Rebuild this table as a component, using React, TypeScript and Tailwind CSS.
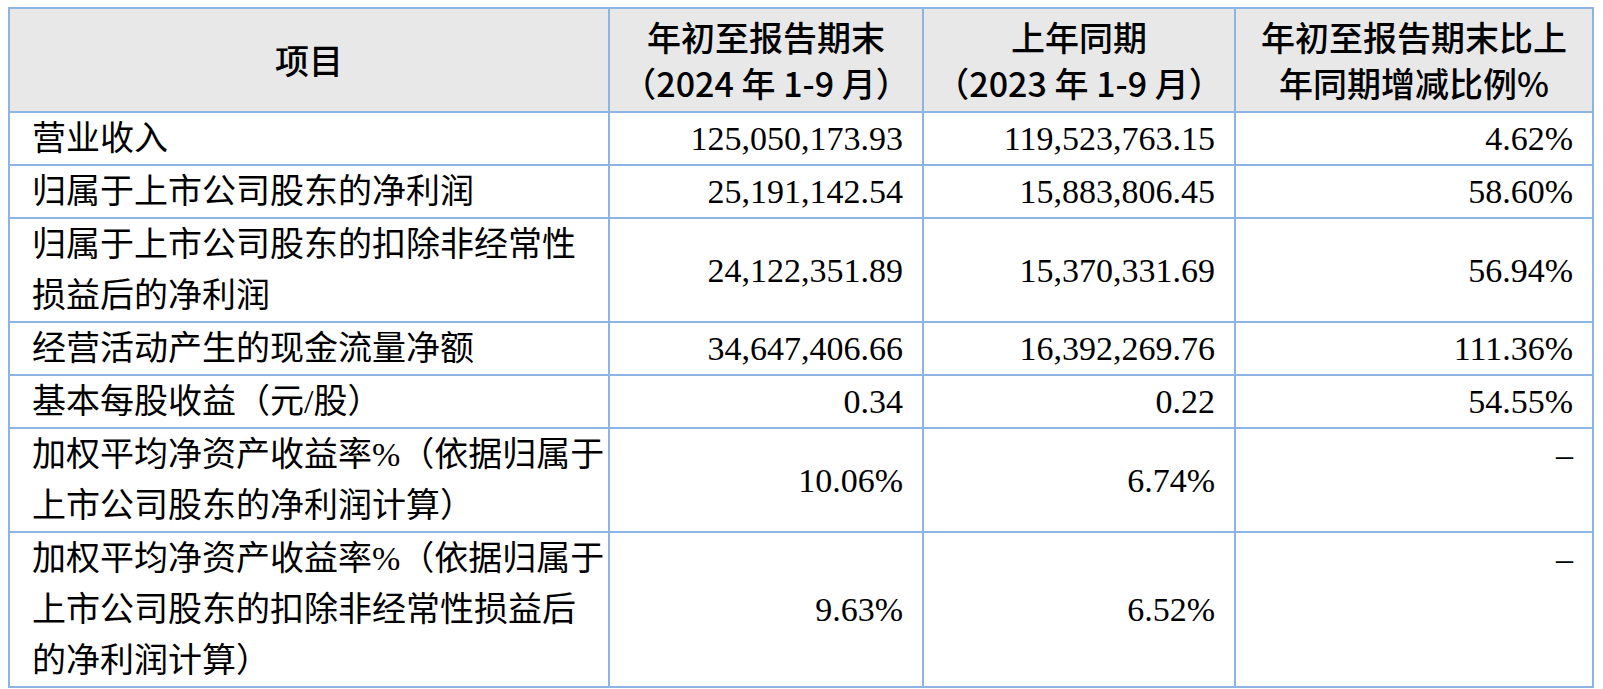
export default function App() {
  const rows: { label: string[]; a: string; b: string; c: string; dash?: boolean }[] = [
    { label: ["营业收入"], a: "125,050,173.93", b: "119,523,763.15", c: "4.62%" },
    { label: ["归属于上市公司股东的净利润"], a: "25,191,142.54", b: "15,883,806.45", c: "58.60%" },
    {
      label: ["归属于上市公司股东的扣除非经常性", "损益后的净利润"],
      a: "24,122,351.89",
      b: "15,370,331.69",
      c: "56.94%",
    },
    { label: ["经营活动产生的现金流量净额"], a: "34,647,406.66", b: "16,392,269.76", c: "111.36%" },
    { label: ["基本每股收益（元/股）"], a: "0.34", b: "0.22", c: "54.55%" },
    {
      label: ["加权平均净资产收益率%（依据归属于", "上市公司股东的净利润计算）"],
      a: "10.06%",
      b: "6.74%",
      c: "–",
      dash: true,
    },
    {
      label: ["加权平均净资产收益率%（依据归属于", "上市公司股东的扣除非经常性损益后", "的净利润计算）"],
      a: "9.63%",
      b: "6.52%",
      c: "–",
      dash: true,
    },
  ]

  const cell = "border-2 border-[#8db4e2] p-0"

  return (
    <div className="min-h-screen bg-white pl-[8px] pt-[7px] font-['Liberation_Serif','Noto_Sans_CJK_SC',serif] text-[34px] text-black">
      <table className="w-[1584px] table-fixed border-collapse">
        <colgroup>
          <col className="w-[600px]" />
          <col className="w-[314px]" />
          <col className="w-[312px]" />
          <col className="w-[358px]" />
        </colgroup>
        <thead>
          <tr className="h-[104px] bg-[#e8e8e8] font-['Noto_Sans_CJK_SC',sans-serif] font-medium leading-[46px]">
            <th className={`${cell} text-center align-middle font-medium`}>项目</th>
            <th className={`${cell} text-center align-middle font-medium`}>
              年初至报告期末
              <br />
              （2024 年 1-9 月）
            </th>
            <th className={`${cell} text-center align-middle font-medium`}>
              上年同期
              <br />
              （2023 年 1-9 月）
            </th>
            <th className={`${cell} text-center align-middle font-medium`}>
              年初至报告期末比上
              <br />
              年同期增减比例%
            </th>
          </tr>
        </thead>
        <tbody className="leading-[51px]">
          {rows.map((r, i) => (
            <tr key={i}>
              <td className={`${cell} whitespace-nowrap pl-[22px] align-middle`}>
                {r.label.map((l, j) => (
                  <div key={j}>{l}</div>
                ))}
              </td>
              <td className={`${cell} pr-[19px] text-right align-middle`}>{r.a}</td>
              <td className={`${cell} pr-[19px] text-right align-middle`}>{r.b}</td>
              <td className={`${cell} pr-[19px] text-right ${r.dash ? "align-top" : "align-middle"}`}>{r.c}</td>
            </tr>
          ))}
        </tbody>
      </table>
    </div>
  )
}
